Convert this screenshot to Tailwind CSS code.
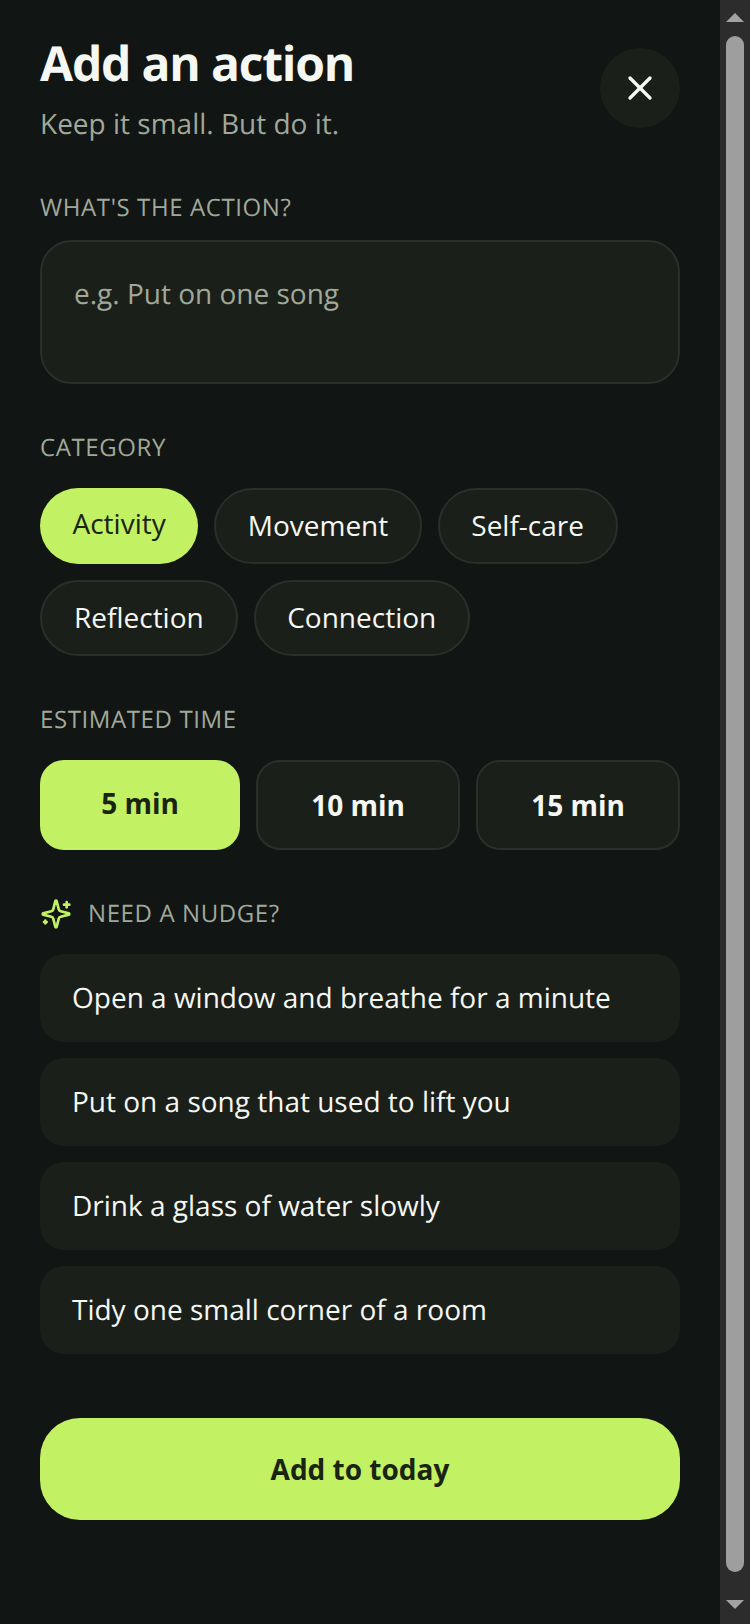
<!DOCTYPE html>
<html lang="en">
<head>
  <meta charset="UTF-8" />
  <meta name="viewport" content="width=device-width, initial-scale=1.0"/>
  <title>Add an action</title>
  <script src="https://cdn.jsdelivr.net/npm/@tailwindcss/browser@4"></script>
</head>
<body class="bg-[#111513] font-['Open_Sans',sans-serif] [text-rendering:geometricPrecision] overflow-hidden">
  <div class="flex w-[750px] h-[1624px] overflow-hidden">
    <!-- Sheet -->
    <main class="w-[720px] h-full px-10 pt-[32px]">
      <!-- Header -->
      <header class="flex justify-between items-start">
        <div>
          <h1 class="text-[48px] leading-[64px] tracking-[-1.2px] font-bold text-[#f5f7f2]">Add an action</h1>
          <p class="mt-[8px] text-[28px] leading-[40px] text-[#a0a89a]">Keep it small. But do it.</p>
        </div>
        <button class="mt-[16px] w-20 h-20 rounded-full bg-[#1b1f1a] flex items-center justify-center">
          <svg class="w-10 h-10 text-[#f5f7f2]" viewBox="0 0 24 24" fill="none" stroke="currentColor" stroke-width="2" stroke-linecap="round" stroke-linejoin="round"><path d="M18 6 6 18"/><path d="m6 6 12 12"/></svg>
        </button>
      </header>

      <!-- Action -->
      <section class="mt-[46px]">
        <h2 class="text-[24px] leading-[36px] tracking-[0.6px] text-[#a0a89a]">WHAT'S THE ACTION?</h2>
        <div class="mt-[14px] h-[144px] rounded-[32px] border-2 border-[#2a2f29] bg-[#1b1f1a] px-[32px] pt-[31px] text-[28px] leading-[42px] text-[#a0a89a]">e.g. Put on one song</div>
      </section>

      <!-- Category -->
      <section class="mt-[46px]">
        <h2 class="text-[24px] leading-[36px] tracking-[0.6px] text-[#a0a89a]">CATEGORY</h2>
        <div class="mt-[22px] flex flex-wrap gap-4">
          <button class="h-[76px] px-[32.5px] pb-[6px] rounded-full bg-[#c2f263] text-[28px] text-[#1a2412]">Activity</button>
          <button class="h-[76px] px-[31.5px] pb-[2px] rounded-full border-2 border-[#2a2f29] bg-[#1b1f1a] text-[28px] text-[#f5f7f2]">Movement</button>
          <button class="h-[76px] px-[31.5px] pb-[2px] rounded-full border-2 border-[#2a2f29] bg-[#1b1f1a] text-[28px] text-[#f5f7f2]">Self-care</button>
          <button class="h-[76px] px-8 pb-[2px] rounded-full border-2 border-[#2a2f29] bg-[#1b1f1a] text-[28px] text-[#f5f7f2]">Reflection</button>
          <button class="h-[76px] px-[31.5px] pb-[2px] rounded-full border-2 border-[#2a2f29] bg-[#1b1f1a] text-[28px] text-[#f5f7f2]">Connection</button>
        </div>
      </section>

      <!-- Time -->
      <section class="mt-[46px]">
        <h2 class="text-[24px] leading-[36px] tracking-[0.6px] text-[#a0a89a]">ESTIMATED TIME</h2>
        <div class="mt-[22px] flex gap-4">
          <button class="w-[200px] h-[90px] pb-[4px] rounded-[24px] bg-[#c2f263] text-[28px] font-bold text-[#1a2412]">5 min</button>
          <button class="flex-1 h-[90px] rounded-[24px] border-2 border-[#2a2f29] bg-[#1b1f1a] text-[28px] font-bold text-[#f5f7f2]">10 min</button>
          <button class="flex-1 h-[90px] rounded-[24px] border-2 border-[#2a2f29] bg-[#1b1f1a] text-[28px] font-bold text-[#f5f7f2]">15 min</button>
        </div>
      </section>

      <!-- Nudge -->
      <section class="mt-[46px]">
        <div class="flex items-center gap-4">
          <svg class="w-8 h-8 text-[#c2f263]" viewBox="0 0 24 24" fill="none" stroke="currentColor" stroke-width="2" stroke-linecap="round" stroke-linejoin="round"><path d="M9.937 15.5A2 2 0 0 0 8.5 14.063l-6.135-1.582a.5.5 0 0 1 0-.962L8.5 9.936A2 2 0 0 0 9.937 8.5l1.582-6.135a.5.5 0 0 1 .963 0L14.063 8.5A2 2 0 0 0 15.5 9.937l6.135 1.581a.5.5 0 0 1 0 .964L15.5 14.063a2 2 0 0 0-1.437 1.437l-1.582 6.135a.5.5 0 0 1-.963 0z"/><path d="M20 3v4"/><path d="M22 5h-4"/><path d="M4 17v2"/><path d="M5 18H3"/></svg>
          <h2 class="text-[24px] leading-[36px] tracking-[0.6px] text-[#a0a89a]">NEED A NUDGE?</h2>
        </div>
        <div class="mt-[22px] flex flex-col gap-4">
          <div class="h-[88px] flex items-center px-8 rounded-[24px] bg-[#1b1f1a] text-[28px] text-[#f5f7f2]">Open a window and breathe for a minute</div>
          <div class="h-[88px] flex items-center px-8 rounded-[24px] bg-[#1b1f1a] text-[28px] text-[#f5f7f2]">Put on a song that used to lift you</div>
          <div class="h-[88px] flex items-center px-8 rounded-[24px] bg-[#1b1f1a] text-[28px] text-[#f5f7f2]">Drink a glass of water slowly</div>
          <div class="h-[88px] flex items-center px-8 rounded-[24px] bg-[#1b1f1a] text-[28px] text-[#f5f7f2]">Tidy one small corner of a room</div>
        </div>
      </section>

      <button class="mt-[64px] w-full h-[102px] rounded-[40px] bg-[#c2f263] text-[28px] font-bold text-[#1a2412]">Add to today</button>
    </main>

    <!-- Scrollbar -->
    <aside class="w-[30px] h-full bg-[#2c2c2c] flex flex-col items-center pt-[13px]">
      <svg class="w-[18px] h-[9px] shrink-0" viewBox="0 0 18 9"><path d="M9 0 18 9H0z" fill="#a3a3a3"/></svg>
      <div class="mt-[14px] w-[18px] h-[1536px] shrink-0 rounded-full bg-[#9e9e9e]"></div>
      <svg class="mt-[28px] w-[18px] h-[9px] shrink-0" viewBox="0 0 18 9"><path d="M0 0H18L9 9z" fill="#a3a3a3"/></svg>
    </aside>
  </div>
</body>
</html>
